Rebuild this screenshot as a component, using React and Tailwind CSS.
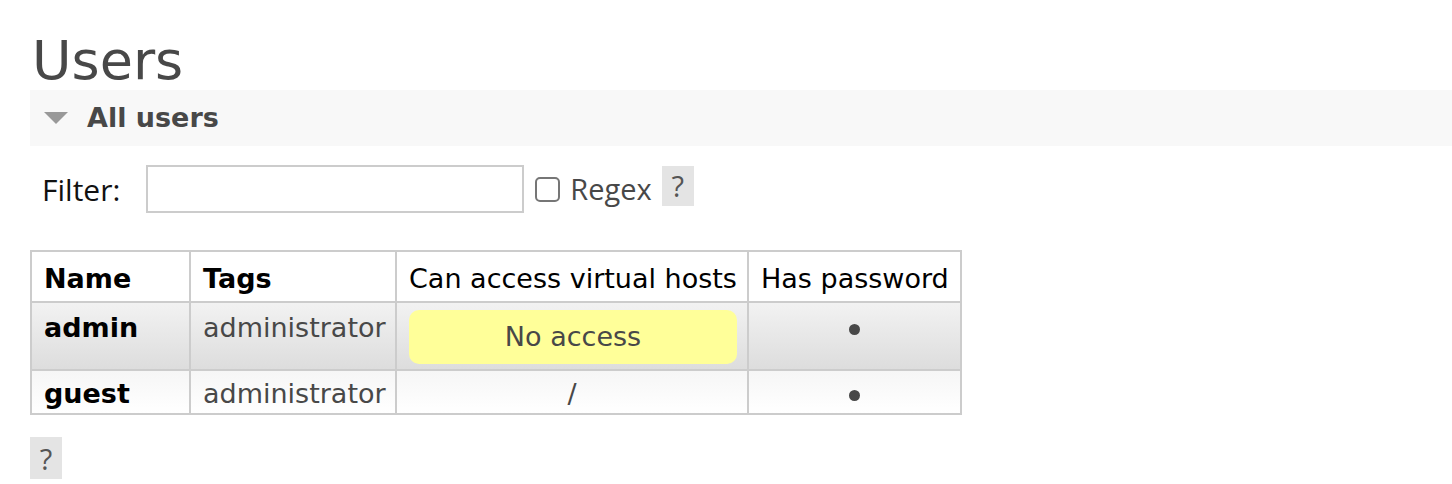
import React from "react";

const users = [
  { name: "admin", tags: "administrator", vhosts: null, password: true },
  { name: "guest", tags: "administrator", vhosts: "/", password: true },
];

const HelpButton = ({ className = "" }) => (
  <span
    className={`flex items-center justify-center w-[32px] h-[40px] bg-[#e4e4e4] text-[#555] text-[29px] leading-none ${className}`}
    style={{ fontFamily: "'Open Sans', sans-serif" }}
  >
    ?
  </span>
);

const Dot = () => (
  <span className="inline-block w-[11px] h-[11px] rounded-full bg-[#484848] align-middle" />
);

const App = () => {
  return (
    <div
      className="w-[1452px] h-[484px] overflow-hidden bg-white pl-[30px] text-[#484848]"
      style={{ fontFamily: "'DejaVu Sans', Verdana, sans-serif" }}
    >
      {/* Page title */}
      <h1 className="pt-[34px] text-[54px] leading-none font-normal pl-[2px]">
        Users
      </h1>

      {/* Section header */}
      <div className="mt-[2px] h-[56px] flex items-center bg-[#f8f8f8]">
        <span className="ml-[14px] w-0 h-0 border-l-[12px] border-r-[12px] border-t-[12px] border-l-transparent border-r-transparent border-t-[#999]" />
        <span className="ml-[19px] text-[27px] leading-[30px] font-bold">
          All users
        </span>
      </div>

      {/* Filter */}
      <div
        className="mt-[19px] h-[48px] flex items-center"
        style={{ fontFamily: "'Open Sans', sans-serif" }}
      >
        <span className="ml-[12px] text-[30px] text-[#111]">Filter:</span>
        <input
          type="text"
          className="ml-[26px] w-[378px] h-[48px] border-2 border-[#ccc] bg-white outline-none"
        />
        <span className="ml-[11px] w-[25px] h-[25px] rounded-[5px] border-2 border-[#767676] bg-white" />
        <span className="ml-[10px] text-[29px]">Regex</span>
        <HelpButton className="ml-[10px] -mt-[7px]" />
      </div>

      {/* Table */}
      <div className="mt-[37px] w-[932px] grid grid-cols-[159px_206px_352px_213px] border-l-2 border-t-2 border-[#ccc] text-[27px] leading-[30px]">
        {/* Header */}
        <div className="h-[51px] pt-[12px] px-3 border-r-2 border-b-2 border-[#ccc] bg-white text-black font-bold">
          Name
        </div>
        <div className="h-[51px] pt-[12px] px-3 border-r-2 border-b-2 border-[#ccc] bg-white text-black font-bold">
          Tags
        </div>
        <div className="h-[51px] pt-[12px] pl-3 border-r-2 border-b-2 border-[#ccc] bg-white text-black whitespace-nowrap">
          Can access virtual hosts
        </div>
        <div className="h-[51px] pt-[12px] px-3 border-r-2 border-b-2 border-[#ccc] bg-white text-black whitespace-nowrap">
          Has password
        </div>

        {users.map((u, i) => {
          const rowBg =
            i === 0
              ? "bg-linear-to-b from-[#f2f2f2] to-[#dddddd]"
              : "bg-linear-to-b from-[#f6f6f6] to-[#ffffff]";
          const h = i === 0 ? "h-[68px] pt-[10px]" : "h-[44px] pt-[8px]";
          return (
            <React.Fragment key={u.name}>
              <div className={`${h} ${rowBg} px-3 border-r-2 border-b-2 border-[#ccc] text-black font-bold`}>
                {u.name}
              </div>
              <div className={`${h} ${rowBg} px-3 border-r-2 border-b-2 border-[#ccc]`}>
                {u.tags}
              </div>
              {u.vhosts ? (
                <div className={`${h} ${rowBg} px-3 border-r-2 border-b-2 border-[#ccc] text-center`}>
                  {u.vhosts}
                </div>
              ) : (
                <div className={`h-[68px] pt-[7px] pl-[12px] pr-[10px] ${rowBg} border-r-2 border-b-2 border-[#ccc]`}>
                  <div className="h-[54px] rounded-[10px] bg-[#ffff99] flex items-center justify-center">
                    No access
                  </div>
                </div>
              )}
              <div className={`${h} ${rowBg} px-3 border-r-2 border-b-2 border-[#ccc] flex justify-center`}>
                {u.password && (
                  <span className="h-[30px] flex items-center mt-[1px]">
                    <Dot />
                  </span>
                )}
              </div>
            </React.Fragment>
          );
        })}
      </div>

      <HelpButton className="mt-[22px] h-[42px]" />
    </div>
  );
};

export default App;
